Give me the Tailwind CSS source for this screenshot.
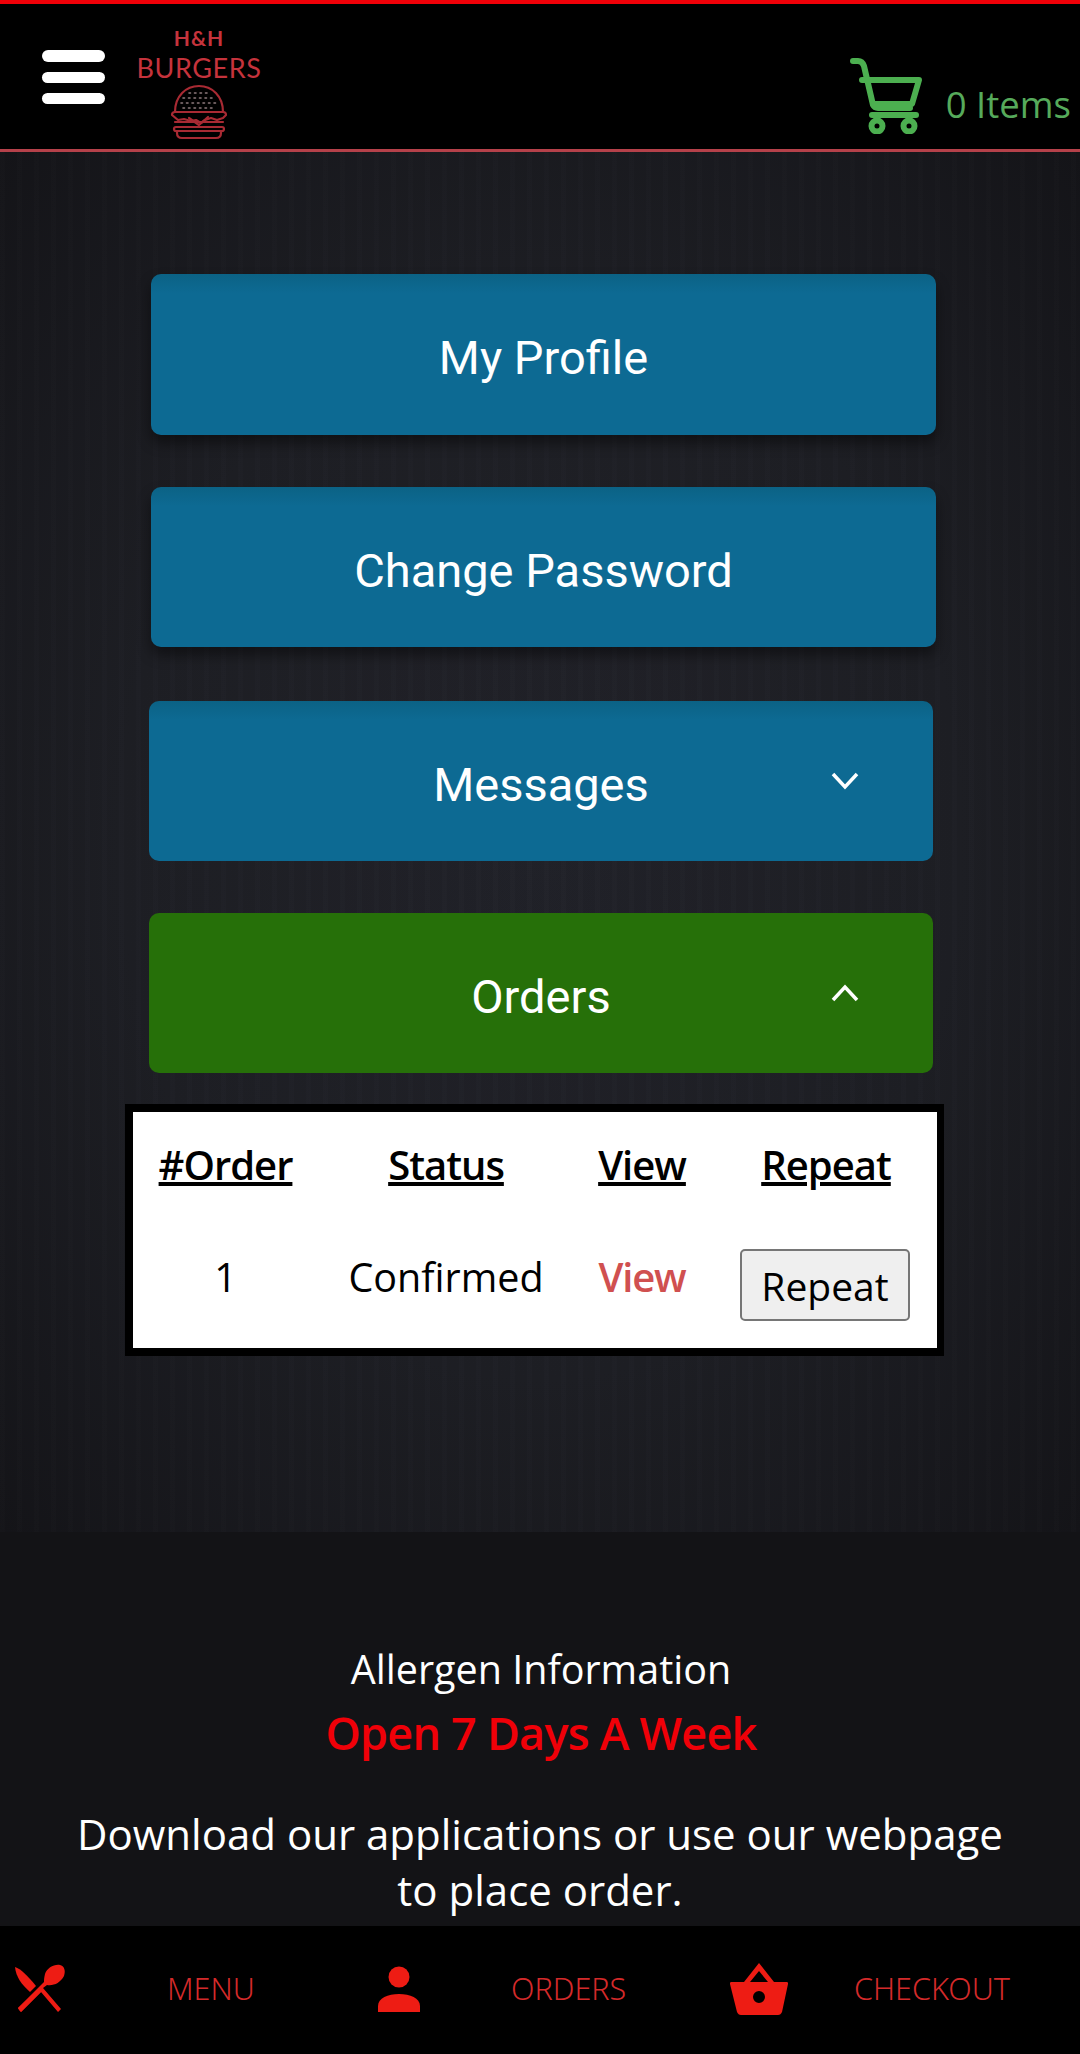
<!DOCTYPE html>
<html lang="en">
<head>
  <meta charset="UTF-8">
  <title>H&amp;H Burgers</title>
  <script src="https://cdn.jsdelivr.net/npm/@tailwindcss/browser@4"></script>
</head>
<body class="bg-black font-['Open_Sans',sans-serif]">
  <div class="w-[1080px] h-[2054px] overflow-hidden relative flex flex-col">

    <!-- Header -->
    <header class="h-[152px] shrink-0 bg-black border-t-4 border-t-[#f00008] border-b-[3px] border-b-[#b5414a] flex items-start">
      <div class="ml-[42px] mt-[46px] w-[63px] flex flex-col gap-[10px]">
        <span class="h-[12px] rounded-full bg-white"></span>
        <span class="h-[11px] rounded-full bg-white"></span>
        <span class="h-[11px] rounded-full bg-white"></span>
      </div>
      <div class="ml-[32px] mt-[22px] w-[124px] flex flex-col items-center text-[#c5333c] font-['Lato',sans-serif]">
        <span class="text-[21px] leading-[24px] font-bold tracking-[1px]">H&amp;H</span>
        <span class="mt-[2px] text-[27px] leading-[32px] tracking-[0.6px]">BURGERS</span>
        <svg class="w-[60px] h-[56px]" viewBox="0 0 60 56" fill="none" stroke="#a82a33" stroke-width="2.2" stroke-linejoin="round" stroke-linecap="round">
          <path d="M6 28C6 12 17 2 30 2s24 10 24 26"/>
          <path d="M3 31c0-2 1-3 3-3h48c2 0 3 1 3 3l-3 3-6 2-6-2-6 2-4 3-5-3-5 1-7-2-6 1z"/>
          <path d="M6 38h48M7 43h46a1 1 0 0 1 0 4H7a1 1 0 0 1 0-4zM8 47v2c0 3 2 5 5 5h34c3 0 5-2 5-5v-2"/>
          <path d="M20 34l10 7 9-8" />
          <path stroke-width="1.6" stroke="#8d7a7c" stroke-dasharray="1.5 4" d="M20 9h20M14 14h32M12 19h36M14 24h32"/>
        </svg>
      </div>
      <div class="ml-auto mr-[9px] mt-[54px] flex items-start">
        <svg class="w-[76px] h-[76px]" viewBox="0 0 76 76" fill="none" stroke="#4caf50" stroke-width="6" stroke-linecap="round" stroke-linejoin="round">
          <path d="M3 3h5c3 0 5 2 6 5l9 39c1 2 2 3 5 3h32"/>
          <path d="M12 22h57l-7 24H24"/>
          <path d="M22 57h44"/>
          <circle cx="27" cy="68" r="5.5"/>
          <circle cx="59" cy="68" r="5.5"/>
        </svg>
        <span class="ml-[20px] mt-[28px] text-[36.5px] leading-none text-[#56aa5b] font-normal">0 Items</span>
      </div>
    </header>

    <!-- Content -->
    <main class="flex-1 bg-[#1d1e24] bg-[repeating-linear-gradient(90deg,rgba(255,255,255,0.006)_0px,rgba(255,255,255,0.006)_5px,rgba(0,0,0,0.015)_5px,rgba(0,0,0,0.015)_17px),radial-gradient(ellipse_at_center,#212229_0%,#1d1e24_55%,#141418_100%)] pt-[122px]">
      <a class="pt-2 ml-[151px] w-[785px] h-[161px] flex items-center justify-center rounded-[10px] bg-linear-to-b from-[#0b6285] to-[#0d6a93] to-[12%] shadow-[0_8px_14px_rgba(0,0,0,0.45)] text-white text-[47px] font-['Roboto',sans-serif]">My Profile</a>
      <a class="pt-2 mt-[52px] ml-[151px] w-[785px] h-[160px] flex items-center justify-center rounded-[10px] bg-linear-to-b from-[#0b6285] to-[#0d6a93] to-[12%] shadow-[0_8px_14px_rgba(0,0,0,0.45)] text-white text-[47px] font-['Roboto',sans-serif]">Change Password</a>
      <a class="pt-2 mt-[54px] ml-[149px] w-[784px] h-[160px] flex items-center justify-center rounded-[10px] bg-linear-to-b from-[#0b6285] to-[#0d6a93] to-[12%] text-white text-[47px] font-['Roboto',sans-serif] relative">
        Messages
        <svg class="absolute right-[74px] top-[71px] w-[28px] h-[18px]" viewBox="0 0 28 18" fill="none" stroke="white" stroke-width="3.5"><path d="M2 2l12 13L26 2"/></svg>
      </a>
      <a class="pt-2 mt-[52px] ml-[149px] w-[784px] h-[160px] flex items-center justify-center rounded-[10px] bg-[#267009] text-white text-[47px] font-['Roboto',sans-serif] relative">
        Orders
        <svg class="absolute right-[74px] top-[71px] w-[28px] h-[18px]" viewBox="0 0 28 18" fill="none" stroke="white" stroke-width="3.5"><path d="M2 16L14 3l12 13"/></svg>
      </a>

      <div class="mt-[31px] ml-[125px] w-[819px] h-[252px] border-[8px] border-r-[7px] border-black bg-white text-black text-[39.5px]">
        <div class="grid grid-cols-[185px_256px_136px_232px] pt-[23px] text-center">
          <span class="text-[40px] tracking-[-1px] font-semibold underline">#Order</span>
          <span class="text-[40px] tracking-[-1px] font-semibold underline">Status</span>
          <span class="text-[40px] tracking-[-1px] font-semibold underline">View</span>
          <span class="text-[40px] tracking-[-1px] font-semibold underline">Repeat</span>
        </div>
        <div class="grid grid-cols-[185px_256px_136px_232px] mt-[53px] text-center items-start">
          <span>1</span>
          <span>Confirmed</span>
          <span class="text-[40px] tracking-[-1.2px] font-semibold text-[#d05050] -mt-[1px]">View</span>
          <span class="flex justify-center mt-[1px] pr-[2px]">
            <button class="w-[170px] h-[72px] rounded-[5px] border-2 border-[#767676] bg-[#efefef] text-[39px] leading-none">Repeat</button>
          </span>
        </div>
      </div>
    </main>

    <!-- Footer -->
    <footer class="h-[394px] shrink-0 bg-[#131316] text-center text-white pt-[112px]">
      <p class="text-[39.5px] leading-[50px] pl-[2px]">Allergen Information</p>
      <p class="mt-[7px] leading-[64px] font-semibold text-[#f00008] text-[45px] tracking-[-0.8px] pl-[2px]">Open 7 Days A Week</p>
      <p class="mt-[41px] text-[42px] leading-[56px] w-[960px] mx-auto">Download our applications or use our webpage to place order.</p>
    </footer>

    <!-- Bottom nav -->
    <nav class="h-[128px] shrink-0 bg-black grid grid-cols-3 text-[#d42a2a] text-[30.5px] font-['Noto_Sans',sans-serif] font-light">
      <a class="flex items-center pb-[2px]">
        <svg class="ml-[14px] w-[52px] h-[50px]" viewBox="0 0 52 50" fill="#ee1c14">
          <path d="M1 3c6 2 12 8 21 19l-6 6C8 21 2 13 1 3z"/>
          <path d="M4 44l1 2 2 2L27 28l17 20 3-3L29 24l4-3c7 1 13-2 17-9 2-6 0-10-4-11-6-1-13 3-15 9-1 4-1 6-1 8z"/>
          <path d="M4 44l3 4 20-20-3-3z"/>
        </svg>
        <span class="ml-[101px]">MENU</span>
      </a>
      <a class="flex items-center pb-[2px]">
        <svg class="ml-[17px] w-[44px] h-[46px]" viewBox="0 0 44 46" fill="#ee1c14">
          <circle cx="22" cy="11" r="10.5"/>
          <path d="M1 46v-6c0-8 10-12 21-12s21 4 21 12v6z"/>
        </svg>
        <span class="ml-[90px]">ORDERS</span>
      </a>
      <a class="flex items-center pb-[2px]">
        <svg class="ml-[10px] w-[58px] h-[52px]" viewBox="0 0 58 52" fill="#ee1c14">
          <path fill-rule="evenodd" d="M29 0l15 19h13c1 0 1 1 1 2l-6 28c-1 2-2 3-4 3H11c-2 0-3-1-4-3L0 21c0-1 0-2 1-2h13zM29 8l-9 11h18zM29 28a6 6 0 1 0 0 12 6 6 0 0 0 0-12z"/>
        </svg>
        <span class="ml-[66px]">CHECKOUT</span>
      </a>
    </nav>
  </div>
</body>
</html>
